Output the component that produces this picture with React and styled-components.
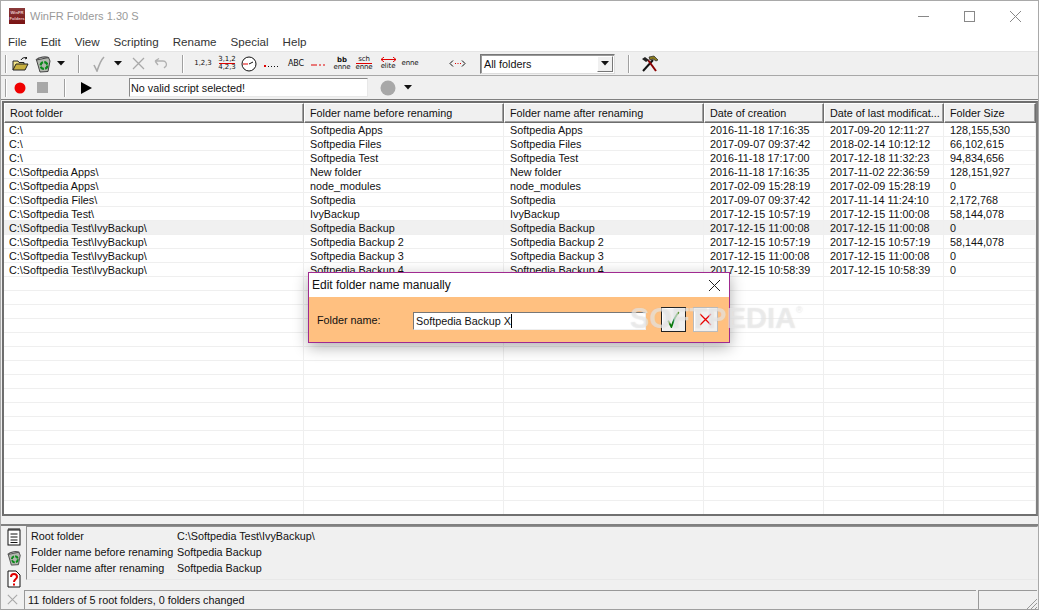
import React from "react";
import styled, { createGlobalStyle } from "styled-components";

const Global = createGlobalStyle`
  html, body { margin: 0; padding: 0; background: #f0f0f0; }
  * { box-sizing: border-box; }
`;
const Win = styled.div`
  width: 1039px; height: 610px; position: relative; overflow: hidden;
  display: flex; flex-direction: column;
  border: 1px solid #a9a9a9; border-bottom-color: #a0a0a0; background: #f0f0f0;
  font-family: "Liberation Sans", Arial, sans-serif; font-size: 10.8px; color: #111;
`;
const TitleBar = styled.div`
  height: 30px; flex: none; background: #fff; display: flex; align-items: center; padding-left: 8px; color: #999; font-size: 11px;
`;
const TitleText = styled.span` margin-left: 5px; flex: 1; letter-spacing: .02px; `;
const Logo = styled.div`
  width: 16px; height: 16px; background: linear-gradient(#8a3a3a, #7a1212); color: #e8c8c8;
  font-size: 4.2px; line-height: 6px; text-align: center; padding-top: 2px; font-weight: 700;
`;
const WinBtn = styled.div` width: 46px; height: 29px; display: flex; align-items: center; justify-content: center; `;
const MenuBar = styled.div`
  height: 21px; flex: none; background: #fff; display: flex; align-items: center; padding-left: 7px; gap: 14px; color: #333; font-size: 11.6px; border-bottom: 1px solid #e4e4e4;
`;
const Toolbar = styled.div`
  height: 24px; flex: none; display: flex; align-items: center; background: #f0f0f0; border-bottom: 1px solid ${p => p.$line || "#a8a8a8"};
`;
const Sep = styled.div`
  width: 2px; height: 18px; flex: none; margin-left: ${p => p.$ml}px; background: #a0a0a0; border-right: 1px solid #fff;
`;
const Tool = styled.div`
  width: ${p => p.$w}px; margin-left: ${p => p.$ml || 0}px; height: 22px; flex: none; display: flex; align-items: center; justify-content: center; overflow: visible;
  & > * { flex: none; }
`;
const TinyText = styled.div`
  font-size: ${p => p.$s || 7}px; line-height: 7px; text-align: center; white-space: nowrap; color: #111; font-family: "DejaVu Sans", sans-serif;
  font-weight: ${p => p.$b ? 700 : 400}; letter-spacing: -.1px;
`;
const Strike = styled.div`
  height: 1px; background: #e00000; margin: 0 auto; width: ${p => p.$w || 16}px;
`;
const Select = styled.div`
  width: 135px; height: 20px; margin-left: 15px; flex: none; background: #fff; display: flex; align-items: center; padding-left: 3px;
  border: 1px solid; border-color: #777 #ddd #ddd #777; box-shadow: inset 1px 1px 0 #999;
`;
const SelectLabel = styled.span` flex: 1; `;
const SelectBtn = styled.div`
  width: 16px; height: 16px; margin-right: 1px; background: #f0f0f0; border: 1px solid; border-color: #fff #777 #777 #fff; display: flex; align-items: center; justify-content: center;
`;
const ScriptInput = styled.div`
  width: 239px; height: 19px; flex: none; margin-left: 23px; background: #fff; display: flex; align-items: center; padding-left: 1px;
  border: 1px solid; border-color: #888 #e8e8e8 #e8e8e8 #888;
`;
const ListWrap = styled.div`
  flex: none; height: 415px; margin: 1px 0 0 1px; width: 1036px; border: 2px solid #6e6e6e; border-right-color: #808080; border-bottom-color: #707070; background: #fff; overflow: hidden;
`;
const cols = "300px 200px 200px 120px 120px 1fr";
const HeadRow = styled.div`
  display: grid; grid-template-columns: ${cols}; height: 20px; background: #f0f0f0;
`;
const HeadCell = styled.div`
  display: flex; align-items: center; padding: 0 0 0 5px; white-space: nowrap; overflow: hidden;
  border: 1px solid; border-color: #fff #6e6e6e #6e6e6e #fff; box-shadow: inset -1px -1px 0 #a0a0a0;
`;
const Row = styled.div`
  display: grid; grid-template-columns: ${cols}; height: 14px; background: ${p => p.$sel ? "#f0f0f0" : "#fff"};
  border-bottom: 1px solid #efefef; line-height: 14px;
`;
const Cell = styled.div`
  padding-left: 6px; white-space: nowrap; overflow: hidden; border-right: 1px solid #efefef;
  &:first-child { padding-left: 5px; }
`;
const Info = styled.div`
  flex: 1; display: flex; border-top: 2px solid #808080; margin-top: 8px; min-height: 0;
`;
const InfoIcons = styled.div`
  width: 25px; flex: none; display: flex; flex-direction: column; align-items: center; gap: 4px; padding-top: 2px;
`;
const InfoBox = styled.div`
  flex: 1; height: 54px; border: 1px solid; border-color: #909090 transparent #e8e8e8 #909090; padding: 1px 4px;
  display: grid; grid-template-columns: 146px 1fr; grid-auto-rows: 16px; align-items: center; line-height: 16px; white-space: nowrap;
`;
const StatusBar = styled.div`
  height: 20px; flex: none; display: flex; align-items: stretch; padding: 1px 1px 0 0;
`;
const StatusIcon = styled.div` width: 23px; flex: none; display: flex; align-items: center; justify-content: center; `;
const StatusPanel = styled.div`
  flex: ${p => p.$w ? "none" : 1}; width: ${p => p.$w ? p.$w + "px" : "auto"}; border-left: 1px solid #999; border-top: 1px solid #999; margin-right: ${p => p.$mr || 0}px;
  padding-left: 3px; display: flex; align-items: center; position: relative;
`;
const Grip = styled.svg` position: absolute; right: 0; bottom: 0; `;
const Dialog = styled.div`
  position: absolute; left: 307px; top: 271px; width: 422px; height: 71px; background: #ffc080; border: 1px solid #a02a90; box-shadow: 0 4px 14px rgba(0,0,0,.32);
  display: flex; flex-direction: column;
`;
const DialogTitle = styled.div` height: 24px; flex: none; background: #fff; display: flex; align-items: center; padding-left: 3px; justify-content: space-between; padding-right: 9px; font-size: 12px; `;
const DialogBody = styled.div` flex: 1; display: flex; align-items: center; padding-left: 8px; `;
const FieldLabel = styled.span` width: 96px; flex: none; padding-top: 1px; `;
const Field = styled.div`
  width: 233px; height: 18px; margin-top: 3px; flex: none; background: #fff; display: flex; align-items: center; padding-left: 2px; border: 1px solid; border-color: #777 #eee #eee #777;
`;
const Caret = styled.span` display: inline-block; width: 1px; height: 14px; background: #000; `;
const DlgBtn = styled.div`
  width: 25px; height: 25px; flex: none; margin-left: ${p => p.$ml}px; background: #f0f0f0; display: flex; align-items: center; justify-content: center;
  border: 1px solid ${p => p.$active ? "#222" : "#bbb"}; box-shadow: inset 1px 1px 0 #fff;
`;
const Watermark = styled.div`
  position: absolute; left: 629px; top: 301px; font-size: 29px; font-weight: 700; color: rgba(255,255,255,.42); pointer-events: none; white-space: nowrap;
  font-family: "Liberation Sans", sans-serif; text-shadow: 0 0 1px rgba(190,190,190,.55);
`;
const WatermarkMark = styled.span` font-size: 9px; vertical-align: 15px; font-weight: 400; `;

const rows = [
  ["C:\\", "Softpedia Apps", "2016-11-18 17:16:35", "2017-09-20 12:11:27", "128,155,530"],
  ["C:\\", "Softpedia Files", "2017-09-07 09:37:42", "2018-02-14 10:12:12", "66,102,615"],
  ["C:\\", "Softpedia Test", "2016-11-18 17:17:00", "2017-12-18 11:32:23", "94,834,656"],
  ["C:\\Softpedia Apps\\", "New folder", "2016-11-18 17:16:35", "2017-11-02 22:36:59", "128,151,927"],
  ["C:\\Softpedia Apps\\", "node_modules", "2017-02-09 15:28:19", "2017-02-09 15:28:19", "0"],
  ["C:\\Softpedia Files\\", "Softpedia", "2017-09-07 09:37:42", "2017-11-14 11:24:10", "2,172,768"],
  ["C:\\Softpedia Test\\", "IvyBackup", "2017-12-15 10:57:19", "2017-12-15 11:00:08", "58,144,078"],
  ["C:\\Softpedia Test\\IvyBackup\\", "Softpedia Backup", "2017-12-15 11:00:08", "2017-12-15 11:00:08", "0"],
  ["C:\\Softpedia Test\\IvyBackup\\", "Softpedia Backup 2", "2017-12-15 10:57:19", "2017-12-15 10:57:19", "58,144,078"],
  ["C:\\Softpedia Test\\IvyBackup\\", "Softpedia Backup 3", "2017-12-15 11:00:08", "2017-12-15 11:00:08", "0"],
  ["C:\\Softpedia Test\\IvyBackup\\", "Softpedia Backup 4", "2017-12-15 10:58:39", "2017-12-15 10:58:39", "0"],
];
const blanks = Array.from({ length: 18 });

const Recycle = ({ size = 18 }) => (
  <svg width={size} height={size} viewBox="0 0 18 18">
    <path d="M2.500 5L14.500 2.500 16 6 14 16.500 6 17z" fill="#b4b8b0" stroke="#444" />
    <path d="M2 5c3-3 10-4 13-2" fill="none" stroke="#555" strokeWidth="1.500" />
    <circle cx="10" cy="10.500" r="3.400" fill="none" stroke="#0a8a1a" strokeWidth="2.200" strokeDasharray="4 1.300" />
  </svg>
);
const Folder = () => (
  <svg width="17" height="14" viewBox="0 0 17 14">
    <path d="M1 13V4h5l1 1.500h5V7" fill="#f4e58a" stroke="#222" />
    <path d="M1 13L4 7h12l-3 6z" fill="#c8b040" stroke="#222" />
    <path d="M9 3c1-2 3-3 6-2M15 1l-1.500-1M15 1l-2 1" fill="none" stroke="#111" />
  </svg>
);
const Arrow = ({ c = "#111" }) => <svg width="9" height="5" viewBox="0 0 9 5"><path d="M0 0h8L4 4.500z" fill={c} /></svg>;
const Check = ({ c = "#a8a8a8", s = 16 }) => (
  <svg width={s} height={s} viewBox="0 0 16 16"><path d="M3 9l3 6C8 9 10 4 13 1" fill="none" stroke={c} strokeWidth="1.600" /></svg>
);
const Cross = ({ c = "#a8a8a8", s = 13 }) => (
  <svg width={s} height={s} viewBox="0 0 13 13"><path d="M1 1l11 11M12 1L1 12" stroke={c} strokeWidth="1.300" /></svg>
);
const Undo = () => (
  <svg width="14" height="11" viewBox="0 0 14 11"><path d="M1 3h8c3 0 4 3 3 5l-2 2M1 3l4-2.500M1 3l3 4" fill="none" stroke="#b0b0b0" strokeWidth="1.300" /></svg>
);
const Clock = () => (
  <svg width="16" height="16" viewBox="0 0 16 16">
    <circle cx="8" cy="8" r="7" fill="#fff" stroke="#111" />
    <path d="M8 8l4-2" stroke="#111" /><path d="M2 8h5" stroke="#e00000" />
  </svg>
);
const Dots = () => (
  <svg width="16" height="10" viewBox="0 0 16 10">
    <rect x="0" y="6" width="2" height="2" fill="#e00000" />
    {[4, 7, 10, 13].map(x => <rect key={x} x={x} y="7" width="1" height="1" fill="#111" />)}
  </svg>
);
const Dashes = () => (
  <svg width="16" height="10" viewBox="0 0 16 10">
    <path d="M0 6h6" stroke="#e00000" />
    <path d="M8 6h2M12 6h2" stroke="#e00000" />
  </svg>
);
const Span = () => (
  <svg width="17" height="7" viewBox="0 0 17 7">
    <path d="M4 .5L1 3.500 4 6.500M13 .5L16 3.500 13 6.500" fill="none" stroke="#111" />
    <path d="M6 3.500h1M8.500 3.500h1M11 3.500h1" stroke="#e00000" />
  </svg>
);
const EliteArrow = () => (
  <svg width="15" height="5" viewBox="0 0 15 5" style={{ display: "block", margin: "0 auto 1px" }}>
    <path d="M0 2.500h15M3 0L0 2.500 3 5M12 0l3 2.500L12 5" fill="none" stroke="#e00000" />
  </svg>
);
const Hammer = () => (
  <svg width="18" height="17" viewBox="0 0 18 17">
    <path d="M2 16L12 5" stroke="#111" strokeWidth="2" /><path d="M7 5l8 11" stroke="#8a0000" strokeWidth="2" />
    <path d="M8 2l5-1 4 4-2 1-3-2-3 1z" fill="#8a7a20" stroke="#222" strokeWidth=".7" />
    <path d="M1 4l3-2 4 3-3 2z" fill="#222" />
  </svg>
);
const Notes = () => (
  <svg width="14" height="18" viewBox="0 0 14 18">
    <rect x="1" y="2" width="12" height="15" fill="#fff" stroke="#111" />
    <path d="M1 1h12M3.500 6h7M3.500 9h7M3.500 12h7M3.500 14.500h7" stroke="#111" />
  </svg>
);
const Question = () => (
  <svg width="14" height="18" viewBox="0 0 14 18">
    <path d="M1 1h8l4 4v12H1z" fill="#fff" stroke="#111" />
    <path d="M4 7c0-4 6-4 6 0 0 2-3 2-3 5" fill="none" stroke="#e00000" strokeWidth="2" />
    <rect x="6" y="13.500" width="2" height="2" fill="#e00000" />
  </svg>
);

export default function App() {
  return (
    <>
      <Global />
      <Win>
        <TitleBar>
          <Logo>WinFR Folders</Logo>
          <TitleText>WinFR Folders 1.30 S</TitleText>
          <WinBtn><svg width="11" height="11"><path d="M0 5.500h11" stroke="#888" /></svg></WinBtn>
          <WinBtn><svg width="11" height="11"><rect x=".5" y=".5" width="10" height="10" fill="none" stroke="#888" /></svg></WinBtn>
          <WinBtn><svg width="11" height="11"><path d="M0 0l11 11M11 0L0 11" stroke="#888" /></svg></WinBtn>
        </TitleBar>
        <MenuBar>
          {["File", "Edit", "View", "Scripting", "Rename", "Special", "Help"].map(m => <span key={m}>{m}</span>)}
        </MenuBar>
        <Toolbar>
          <Sep $ml={4} />
          <Tool $w={26}><Folder /></Tool>
          <Tool $w={20}><Recycle /></Tool>
          <Tool $w={16}><Arrow /></Tool>
          <Sep $ml={9} />
          <Tool $w={38}><Check /></Tool>
          <Tool $w={0}><Arrow /></Tool>
          <Tool $w={40}><Cross /></Tool>
          <Tool $w={6}><Undo /></Tool>
          <Sep $ml={18} />
          <Tool $w={38}><TinyText>1,2,3</TinyText></Tool>
          <Tool $w={10}><div><TinyText>3,1,2</TinyText><Strike /><TinyText>4,2,3</TinyText></div></Tool>
          <Tool $w={34}><Clock /></Tool>
          <Tool $w={12}><Dots /></Tool>
          <Tool $w={36}><TinyText $s={8}>ABC</TinyText></Tool>
          <Tool $w={10}><Dashes /></Tool>
          <Tool $w={36}><div><TinyText $b>bb</TinyText><TinyText>enne</TinyText></div></Tool>
          <Tool $w={8}><div><TinyText>sch</TinyText><Strike /><TinyText>enne</TinyText></div></Tool>
          <Tool $w={40}><div><EliteArrow /><TinyText>elite</TinyText></div></Tool>
          <Tool $w={4}><TinyText>enne</TinyText></Tool>
          <Tool $w={16} $ml={37}><Span /></Tool>
          <Select>
            <SelectLabel>All folders</SelectLabel>
            <SelectBtn><Arrow /></SelectBtn>
          </Select>
          <Sep $ml={13} />
          <Tool $w={40}><Hammer /></Tool>
        </Toolbar>
        <Toolbar $line="#808080">
          <Sep $ml={4} />
          <Tool $w={25}><svg width="12" height="12"><circle cx="6" cy="6" r="5.500" fill="#f00000" /></svg></Tool>
          <Tool $w={20}><svg width="11" height="11"><rect width="11" height="11" fill="#a8a8a8" /></svg></Tool>
          <Sep $ml={12} />
          <Tool $w={40}><svg width="11" height="12"><path d="M0 0l11 6-11 6z" fill="#000" /></svg></Tool>
          <ScriptInput>No valid script selected!</ScriptInput>
          <Tool $w={40}><svg width="16" height="16"><circle cx="8" cy="8" r="7.500" fill="#a8a8a8" /></svg></Tool>
          <Tool $w={0}><Arrow /></Tool>
        </Toolbar>
        <ListWrap>
          <HeadRow>
            {["Root folder", "Folder name before renaming", "Folder name after renaming", "Date of creation", "Date of last modificat...", "Folder Size"].map(h => <HeadCell key={h}>{h}</HeadCell>)}
          </HeadRow>
          {rows.map((r, i) => (
            <Row key={i} $sel={i === 7}>
              <Cell>{r[0]}</Cell><Cell>{r[1]}</Cell><Cell>{r[1]}</Cell><Cell>{r[2]}</Cell><Cell>{r[3]}</Cell><Cell>{r[4]}</Cell>
            </Row>
          ))}
          {blanks.map((_, i) => (
            <Row key={i}><Cell /><Cell /><Cell /><Cell /><Cell /><Cell /></Row>
          ))}
        </ListWrap>
        <Info>
          <InfoIcons><Notes /><Recycle size={16} /><Question /></InfoIcons>
          <InfoBox>
            <span>Root folder</span><span>C:\Softpedia Test\IvyBackup\</span>
            <span>Folder name before renaming</span><span>Softpedia Backup</span>
            <span>Folder name after renaming</span><span>Softpedia Backup</span>
          </InfoBox>
        </Info>
        <StatusBar>
          <StatusIcon><Cross s={11} /></StatusIcon>
          <StatusPanel $mr={2}>11 folders of 5 root folders, 0 folders changed</StatusPanel>
          <StatusPanel $w={59}>
            <Grip width="11" height="11"><path d="M1 11L11 1M5 11l6-6M9 11l2-2" stroke="#999" /></Grip>
          </StatusPanel>
        </StatusBar>
        <Dialog>
          <DialogTitle>
            <span>Edit folder name manually</span>
            <svg width="11" height="11"><path d="M0 0l11 11M11 0L0 11" stroke="#222" /></svg>
          </DialogTitle>
          <DialogBody>
            <FieldLabel>Folder name:</FieldLabel>
            <Field>Softpedia Backup X<Caret /></Field>
            <DlgBtn $ml={15} $active><Check c="#0a7a0a" s={17} /></DlgBtn>
            <DlgBtn $ml={7}><Cross c="#e80000" s={13} /></DlgBtn>
          </DialogBody>
        </Dialog>
        <Watermark>SOFTPEDIA<WatermarkMark>®</WatermarkMark></Watermark>
      </Win>
    </>
  );
}
